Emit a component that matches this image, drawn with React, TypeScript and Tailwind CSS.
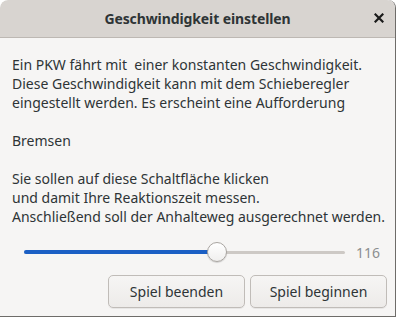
import React from "react";

export default function App() {
  const value = 116;
  return (
    <div className="w-[396px] h-[317px] bg-white overflow-hidden" style={{ fontFamily: '"Noto Sans", "Open Sans", sans-serif' }}>
      <div className="w-[396px] h-[317px] flex flex-col bg-[#f6f5f4] rounded-t-[8px] border-r border-b border-[#6e6c69] overflow-hidden">
        <div className="h-[38px] shrink-0 flex items-center justify-center relative bg-[#d8d4d0] border-b border-[#bdb8b3] rounded-t-[8px]">
          <span className="text-[14px] font-bold text-[#2e3436] tracking-[-0.1px]">Geschwindigkeit einstellen</span>
          <span className="absolute right-[7px] top-[9px] w-[18px] h-[18px] flex items-center justify-center">
            <svg width="10" height="10" viewBox="0 0 10 10">
              <path d="M1.5 1.5 L8.5 8.5 M8.5 1.5 L1.5 8.5" stroke="#1a1a1a" strokeWidth="2.2" strokeLinecap="square" />
            </svg>
          </span>
        </div>
        <div className="pl-[12px] pr-[8px] pt-[17px] text-[14px] leading-[19px] text-[#2e3436]">
          <p>Ein PKW fährt mit&nbsp; einer konstanten Geschwindigkeit.</p>
          <p>Diese Geschwindigkeit kann mit dem Schieberegler</p>
          <p>eingestellt werden. Es erscheint eine Aufforderung</p>
          <p>&nbsp;</p>
          <p>Bremsen</p>
          <p>&nbsp;</p>
          <p>Sie sollen auf diese Schaltfläche klicken</p>
          <p>und damit Ihre Reaktionszeit messen.</p>
          <p>Anschließend soll der Anhalteweg ausgerechnet werden.</p>
        </div>
        <div className="mt-[16px] flex items-center pl-[24px] pr-[15px] h-[20px]">
          <div className="relative w-[321px] h-[20px] flex items-center">
            <div className="w-full h-[3px] rounded-full bg-[#cdc9c5]" />
            <div className="absolute left-0 top-[8px] h-[4px] w-[190px] rounded-full bg-[#1b5fc4]" />
            <div className="absolute left-[183px] top-0 w-[20px] h-[20px] rounded-full bg-gradient-to-b from-white to-[#f0efee] border border-[#a9a5a1] shadow-[0_1px_1px_rgba(0,0,0,0.15)]" />
          </div>
          <span className="ml-auto text-[14px] text-[#8b8e8f]">{value}</span>
        </div>
        <div className="mt-[13px] flex justify-end gap-[5px] pr-[8px]">
          <button className="w-[137px] h-[33px] rounded-[5px] border border-[#c0bcb8] bg-gradient-to-b from-[#f6f5f4] to-[#edebe9] text-[14px] text-[#2e3436] shadow-[0_1px_0_rgba(0,0,0,0.06)]">
            Spiel beenden
          </button>
          <button className="w-[137px] h-[33px] rounded-[5px] border border-[#c0bcb8] bg-gradient-to-b from-[#f6f5f4] to-[#edebe9] text-[14px] text-[#2e3436] shadow-[0_1px_0_rgba(0,0,0,0.06)]">
            Spiel beginnen
          </button>
        </div>
      </div>
    </div>
  );
}
